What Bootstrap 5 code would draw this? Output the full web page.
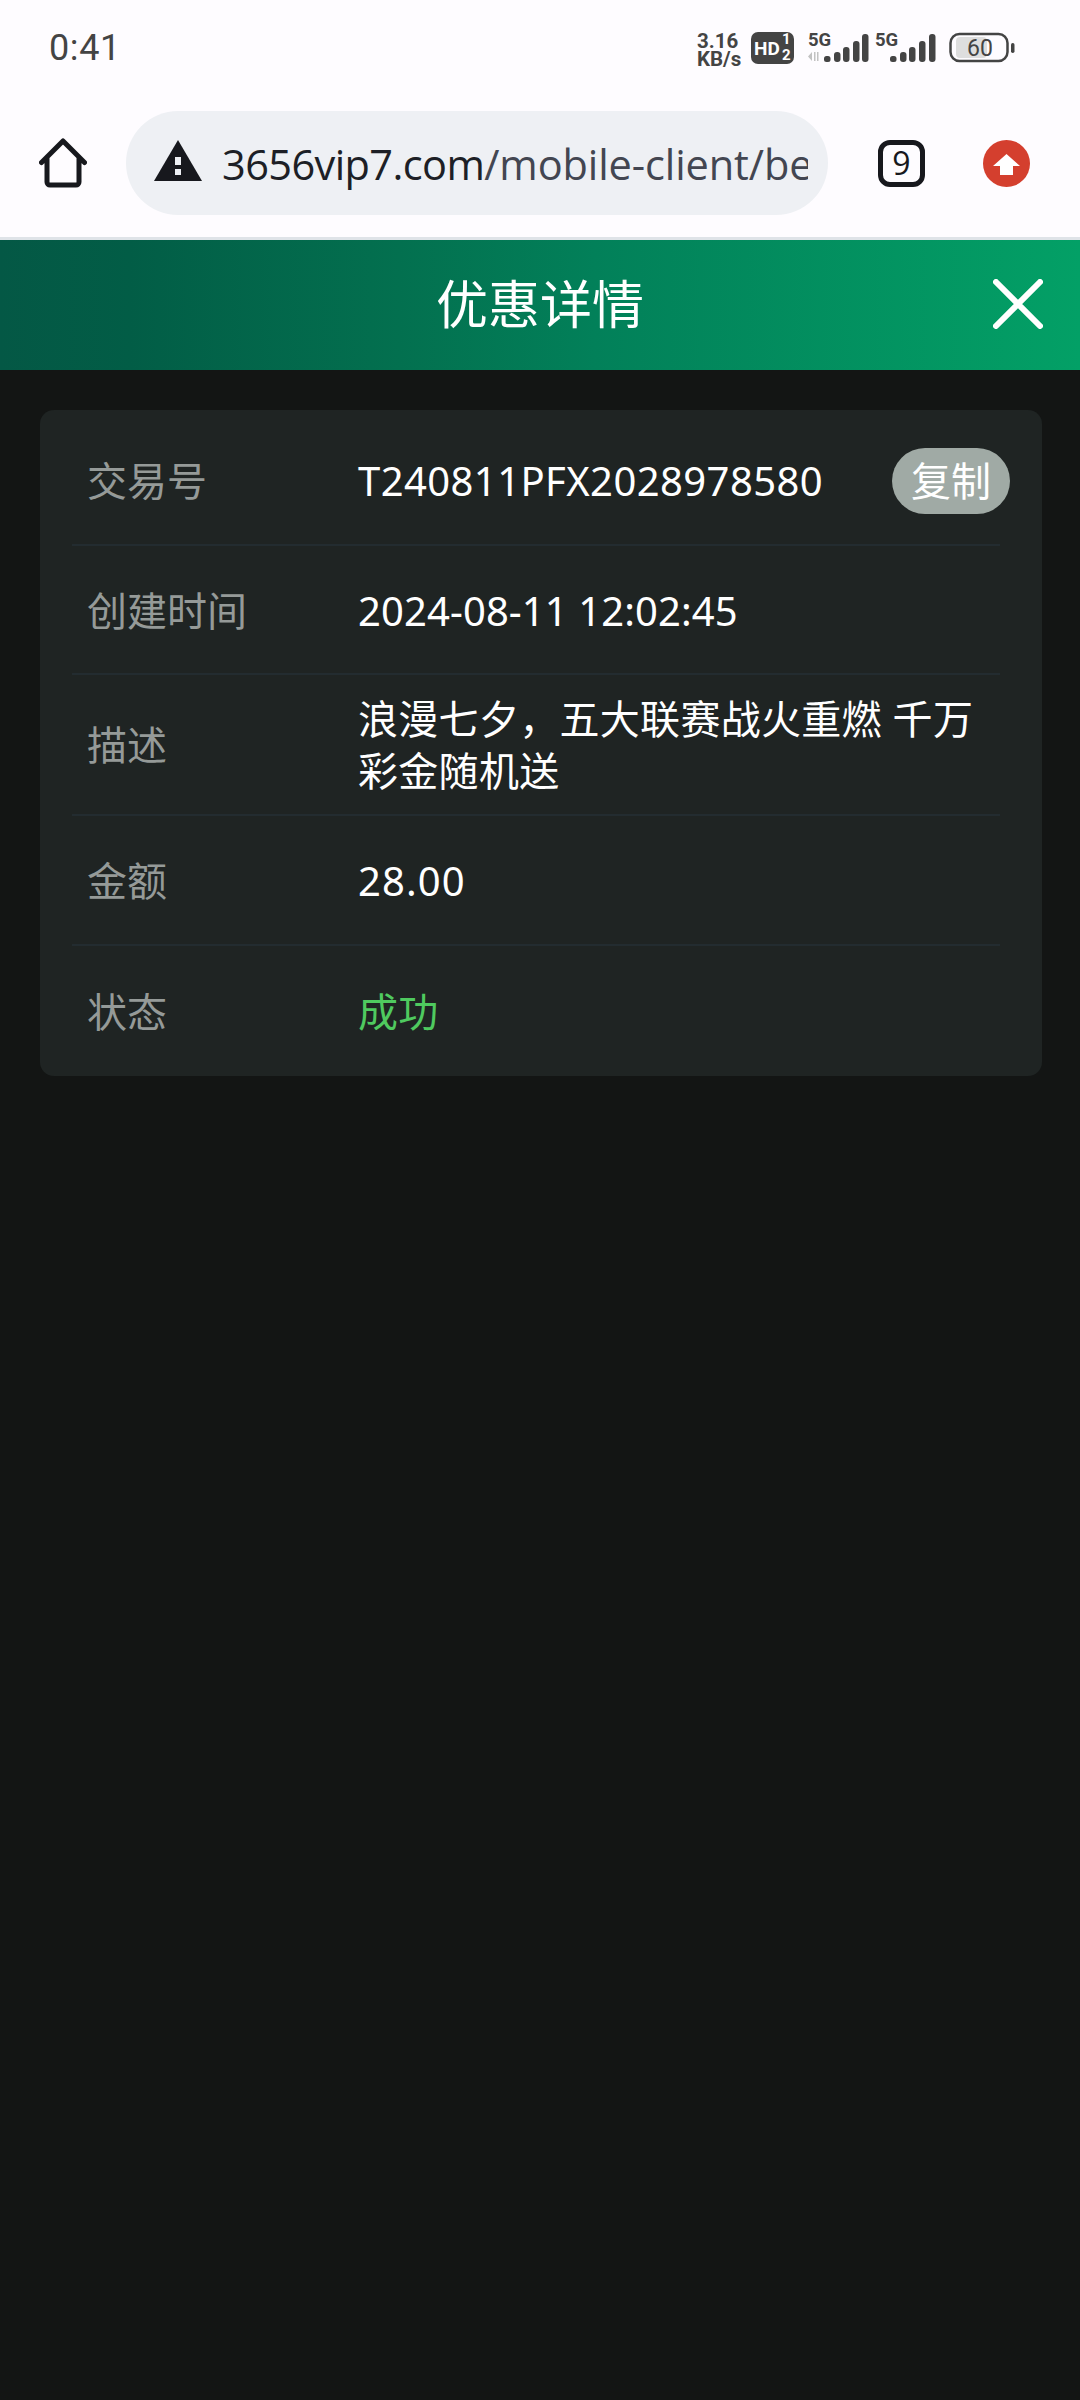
<!DOCTYPE html>
<html lang="zh"><head><meta charset="utf-8">
<link href="https://cdn.jsdelivr.net/npm/bootstrap@5.3.0/dist/css/bootstrap.min.css" rel="stylesheet">
<style>
html,body{height:100%;margin:0}
body{background:#131514;font-family:"Noto Sans","Noto Sans CJK SC",sans-serif;width:1080px;min-height:2400px}
.sbar{height:111px;background:#fefcff;padding:0 0 0 49px;color:#444}
.clock{font-family:Roboto,sans-serif;font-size:36px;line-height:1;margin-top:-16px;letter-spacing:.6px}
.chrome{height:129px;background:#fefcff;border-bottom:3px solid #dfe3e8;padding-bottom:22px}
.homebtn{width:126px}
.urlpill{width:702px;height:104px;background:#eef0f4;border-radius:52px;padding:0 20px 0 28px}
.warnicon{flex:none;margin-top:-5px}
.urltext{font-family:"Open Sans",sans-serif;font-size:41.5px;white-space:nowrap;overflow:hidden;color:#434651;margin-left:20px;width:586px;letter-spacing:-.1px;margin-top:2px}
.urltext b{font-weight:400;color:#1d1f26;letter-spacing:-.6px}
.tabsbtn{margin-left:50px;width:47px;height:47px;border:5px solid #17181d;border-radius:12px;font-size:32px;color:#17181d;line-height:1;font-family:"Open Sans",sans-serif}
.upbtn{margin-left:58px}
.head-bar{height:130px;padding-bottom:2px;background:linear-gradient(90deg,#045845 0,#025d46 12%,#03704f 37%,#028059 55%,#03a066 100%);color:#fff;font-size:52px}
.head-bar .closex{position:absolute;right:37px;top:39px;line-height:0}
.panel{margin:40px 38px 0 40px;background:#1f2423;border-radius:14px;padding:0 42px 0 32px}
.rowline{border-bottom:2px solid #232c30;font-size:40px;height:130px;color:#fff}
.rowline:last-child{border-bottom:0}
.rowline.first{height:136px;padding-top:7px}
.rowline.second{height:129px;padding-top:3px}
.rowline.tall{height:141px}
.rowline.amt{padding-top:2px}
.rowline.st{padding-top:1px}
.lbl{width:286px;color:#959a98;padding-left:15px;flex:none}
.val{line-height:52px;width:622px;letter-spacing:.3px;flex:none}
.first .val{letter-spacing:.42px;width:auto}
.second .val{letter-spacing:.1px}
.amt .val{letter-spacing:1.1px}
.copybtn{background:#a0aaa5;color:#fff;border:0;border-radius:33px;width:118px;height:66px;font-size:40px;line-height:1;padding:0;margin-right:-10px}
.copybtn:hover{background:#a0aaa5;color:#fff}
.ok{color:#4fca5f}
</style></head><body>
<div class="sbar d-flex align-items-center justify-content-between">
  <div class="clock">0:41</div>
  <svg width="383" height="80" viewBox="697 0 383 80" class="align-self-start" aria-hidden="true">
    <g font-family="Roboto,sans-serif" fill="#444">
    <text x="697" y="48" font-size="20.500" font-weight="700">3.16</text>
    <text x="697" y="66" font-size="20.500" font-weight="700">KB/s</text>
    <rect x="751" y="32" width="43" height="32" rx="7"/>
    <text x="754" y="55" font-size="19" font-weight="700" fill="#fff">HD</text>
    <text x="782" y="44" font-size="15" font-weight="700" fill="#fff">1</text>
    <text x="782" y="60" font-size="15" font-weight="700" fill="#fff">2</text>
    <text x="808" y="46" font-size="18.500" font-weight="700">5G</text>
    <text x="875" y="46" font-size="18.500" font-weight="700">5G</text>
    </g>
    <path d="M812 52v9l-4-4.500zM814 52h1.500v9H814zM817 52h1.500v9H817zM820 52v9l0 0z" fill="#c2c2c2"/>
    <g fill="#444">
      <rect x="824" y="56" width="6.500" height="6" rx="2.500"/><rect x="834" y="52" width="6.500" height="10" rx="3"/><rect x="843" y="47" width="6.500" height="15" rx="3"/><rect x="853" y="41" width="6.500" height="21" rx="3"/><rect x="862" y="34" width="6.500" height="28" rx="3"/>
      <rect x="890" y="56" width="6.500" height="6" rx="2.500"/><rect x="900" y="52" width="6.500" height="10" rx="3"/><rect x="909" y="47" width="6.500" height="15" rx="3"/><rect x="919" y="41" width="6.500" height="21" rx="3"/><rect x="929" y="34" width="6.500" height="28" rx="3"/>
    </g>
    <rect x="950.500" y="34" width="57" height="27" rx="9" fill="none" stroke="#444" stroke-width="2.500"/>
    <rect x="956" y="37" width="31" height="21" rx="4" fill="#dedede"/>
    <rect x="1011" y="43" width="3.500" height="10" rx="1.700" fill="#444"/>
    <text x="980" y="56" text-anchor="middle" font-family="Roboto,sans-serif" font-size="23" fill="#444">60</text>
  </svg>
</div>
<div class="chrome d-flex align-items-center">
  <div class="homebtn d-flex justify-content-center"><svg width="48" height="50" viewBox="0 0 48 50" aria-hidden="true"><path d="M2.500 24.500 24 3l21.500 21.500M8 19v25a3 3 0 0 0 3 3h26a3 3 0 0 0 3-3V19" fill="none" stroke="#17181d" stroke-width="5" stroke-linecap="round" stroke-linejoin="round"/></svg></div>
  <div class="urlpill d-flex align-items-center">
    <svg class="warnicon" width="48" height="41" viewBox="0 0 48 41" aria-hidden="true"><path d="M24 0 48 41H0z" fill="#17181d"/><rect x="21" y="17" width="6" height="8" fill="#eef0f4"/><rect x="21" y="29" width="6" height="6" fill="#eef0f4"/></svg>
    <div class="urltext"><b>3656vip7.com</b>/mobile-client/be</div>
  </div>
  <div class="tabsbtn d-flex align-items-center justify-content-center">9</div>
  <svg class="upbtn" width="47" height="47" viewBox="0 0 47 47" aria-hidden="true"><circle cx="23.500" cy="23.500" r="23.500" fill="#d43f2e"/><path d="M23.500 14 37 26H30V35H17V26H10z" fill="#fff"/></svg>
</div>
<div class="head-bar position-relative d-flex align-items-center justify-content-center">优惠详情
  <div class="closex"><svg width="50" height="50" viewBox="0 0 50 50" aria-hidden="true"><path d="M3 3 47 47M47 3 3 47" stroke="#fff" stroke-width="6" stroke-linecap="round"/></svg></div>
</div>
<div class="panel">
  <div class="rowline first d-flex align-items-center"><div class="lbl">交易号</div><div class="val">T240811PFX2028978580</div><button class="btn copybtn ms-auto" type="button">复制</button></div>
  <div class="rowline second d-flex align-items-center"><div class="lbl">创建时间</div><div class="val">2024-08-11 12:02:45</div></div>
  <div class="rowline tall d-flex align-items-center"><div class="lbl">描述</div><div class="val">浪漫七夕，五大联赛战火重燃 千万彩金随机送</div></div>
  <div class="rowline amt d-flex align-items-center"><div class="lbl">金额</div><div class="val">28.00</div></div>
  <div class="rowline st d-flex align-items-center"><div class="lbl">状态</div><div class="val ok">成功</div></div>
</div>
</body></html>
